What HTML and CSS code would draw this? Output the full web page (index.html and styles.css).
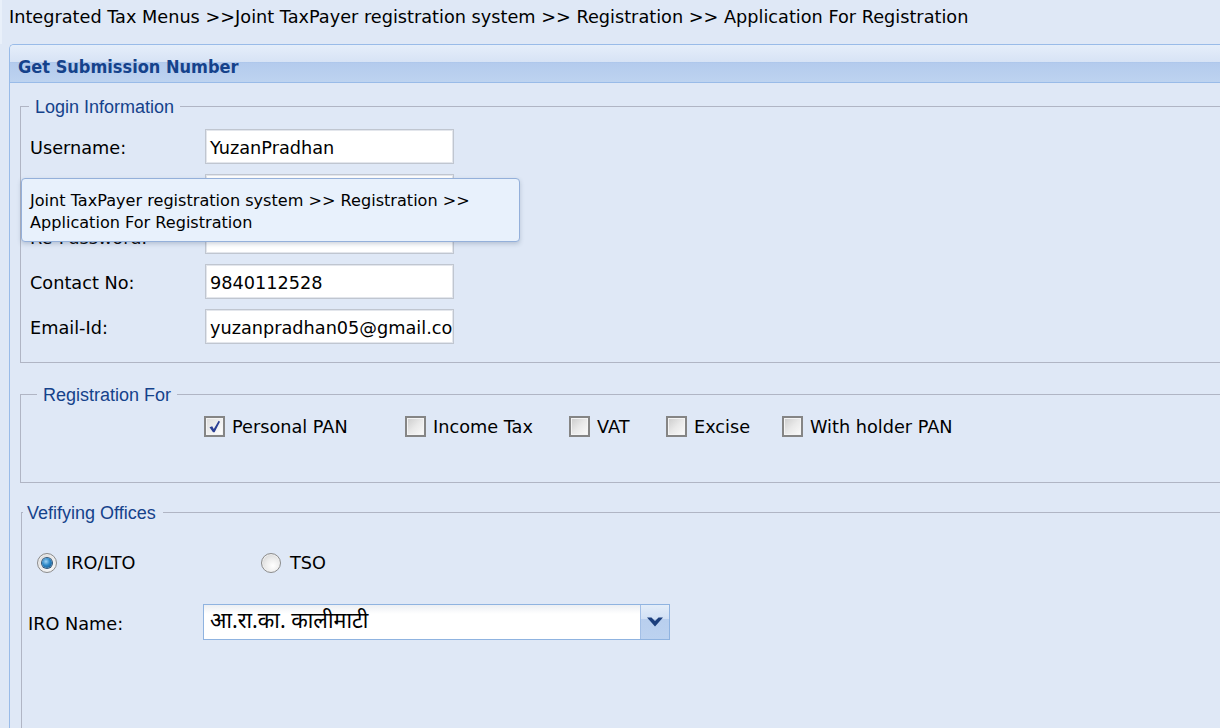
FILE: index.html
```html
<!DOCTYPE html>
<html lang="en">
<head>
<meta charset="utf-8">
<title>Application For Registration</title>
<link rel="stylesheet" href="styles.css">
</head>
<body>
<div class="crumb">Integrated Tax Menus &gt;&gt;Joint TaxPayer registration system &gt;&gt; Registration &gt;&gt; Application For Registration</div>
<div class="panel">
  <div class="panel-head">Get Submission Number</div>
  <div class="panel-body">
    <fieldset class="fs fs-login">
      <legend>Login Information</legend>
      <div class="form-grid">
        <div class="lbl">Username:</div><div class="field">YuzanPradhan</div>
        <div class="lbl">Password:</div><div class="field"></div>
        <div class="lbl">Re-Password:</div><div class="field"></div>
        <div class="lbl">Contact No:</div><div class="field">9840112528</div>
        <div class="lbl">Email-Id:</div><div class="field">yuzanpradhan05@gmail.co</div>
      </div>
    </fieldset>
    <fieldset class="fs fs-reg">
      <legend>Registration For</legend>
      <div class="checks">
        <span></span>
        <div class="chk"><span class="cb cb-on"><svg viewBox="0 0 13 13" width="13" height="13"><path d="M1.5 7.2 L4.2 6.2 L5.8 9 L10.6 0.8 L12 1.8 L6.6 12.2 L5 12.2 Z" fill="#2b3f94"/></svg></span><span class="chk-text">Personal PAN</span></div>
        <div class="chk"><span class="cb"></span><span class="chk-text">Income Tax</span></div>
        <div class="chk"><span class="cb"></span><span class="chk-text">VAT</span></div>
        <div class="chk"><span class="cb"></span><span class="chk-text">Excise</span></div>
        <div class="chk"><span class="cb"></span><span class="chk-text">With holder PAN</span></div>
      </div>
    </fieldset>
    <fieldset class="fs fs-office">
      <legend>Vefifying Offices</legend>
      <div class="radios">
        <div class="rd"><span class="radio radio-on"><span class="dot"></span></span><span class="chk-text">IRO/LTO</span></div>
        <div class="rd"><span class="radio"></span><span class="chk-text">TSO</span></div>
      </div>
      <div class="select-row">
        <div class="lbl">IRO Name:</div>
        <div class="combo">
          <span class="combo-text">आ.रा.का. कालीमाटी</span>
          <span class="trigger"><svg viewBox="0 0 16 10" width="16" height="10"><polygon points="0,0.5 4.5,0.5 8,4 11.5,0.5 16,0.5 8,9.5" fill="#1c3f7c"/></svg></span>
        </div>
      </div>
    </fieldset>
  </div>
</div>
<div class="tooltip">Joint TaxPayer registration system &gt;&gt; Registration &gt;&gt;<br>Application For Registration</div>
</body>
</html>
```

FILE: styles.css
```css
html, body {
  margin: 0;
  height: 100%;
  overflow: hidden;
}
body {
  background: #dfe8f6;
  font-family: "DejaVu Sans", sans-serif;
  font-size: 17.7px;
  color: #000;
  position: relative;
}
.crumb {
  height: 44px;
  box-sizing: border-box;
  line-height: 34px;
  padding-left: 7px;
  border-left: 2px solid #e9f0fa;
  white-space: nowrap;
}
.panel {
  margin-left: 9px;
  width: 1300px;
  height: 700px;
  border: 1px solid #99bbe8;
  border-right: none;
  border-top-left-radius: 5px;
  overflow: hidden;
}
.panel-head {
  height: 38px;
  box-sizing: border-box;
  border-bottom: 1px solid #99bbe8;
  background: linear-gradient(to bottom, #e5eefa 0, #d7e3f5 17px, #a9c4ea 17px, #b4cbed 18px, #bdd3f0 100%);
  color: #15428b;
  font-family: "DejaVu Sans Condensed", "DejaVu Sans", sans-serif;
  font-weight: bold;
  font-size: 18px;
  line-height: 37px;
  padding-left: 8px;
  padding-top: 3px;
}
.panel-body {
  padding-top: 13px;
}
.fs {
  width: 1300px;
  box-sizing: border-box;
  margin: 0 0 0 10px;
  padding: 0;
  border: 1px solid #b0b5c4;
  min-inline-size: 0;
}
.fs legend {
  font-family: "Liberation Sans", Arial, sans-serif;
  font-size: 18px;
  line-height: 17px;
  padding-top: 3px;
  color: #15428b;
}
.fs-login legend { margin-left: -1px; padding-left: 6px; padding-right: 6px; }
.fs-reg legend { margin-left: 7px; padding-left: 6px; padding-right: 6px; }
.fs-office legend { margin-left: -5px; padding-left: 4px; padding-right: 7px; }

.fs-login {
  padding: 13px 0 18px 9px;
}
.form-grid {
  display: grid;
  grid-template-columns: 175px 249px;
  row-gap: 10px;
}
.lbl {
  height: 35px;
  box-sizing: border-box;
  padding-top: 4px;
  line-height: 31px;
  white-space: nowrap;
}
.field {
  height: 35px;
  box-sizing: border-box;
  border: 1px solid #c0c6d0;
  box-shadow: inset 0 0 0 1px #e3e6ec;
  background: #fff;
  padding: 3px 0 0 4px;
  line-height: 31px;
  white-space: nowrap;
  overflow: hidden;
}

.fs-reg {
  margin-top: 21px;
  padding: 11px 0 46px 9px;
}
.checks {
  display: grid;
  grid-template-columns: 174px 201px 164px 97px 116px auto;
  height: 21px;
}
.chk {
  display: flex;
  align-items: center;
  gap: 7px;
  white-space: nowrap;
  line-height: 21px;
}
.chk-text {
  padding-top: 2px;
  line-height: 20px;
}
.cb {
  width: 21px;
  height: 21px;
  box-sizing: border-box;
  border: 2px solid #858585;
  background: linear-gradient(135deg, #cbcbcb 0%, #e9e9e9 50%, #fbfbfb 100%);
  box-shadow: inset 0 0 0 1px #f4f4f4;
  display: flex;
  align-items: center;
  justify-content: center;
  flex: none;
}
.cb-on {
  background: linear-gradient(135deg, #dcdcdc 0%, #f2f2f2 60%, #fff 100%);
}

.fs-office {
  margin-top: 19px;
  margin-left: 11px;
  padding: 30px 0 200px 6px;
}
.radios {
  display: grid;
  grid-template-columns: 224px auto;
  padding-left: 9px;
  height: 20px;
}
.rd {
  display: flex;
  align-items: center;
  gap: 9px;
  line-height: 20px;
}
.rd .chk-text {
  padding-top: 1px;
}
.radio {
  width: 20px;
  height: 20px;
  box-sizing: border-box;
  border-radius: 50%;
  border: 1px solid #8c8c8c;
  background: radial-gradient(circle at 60% 65%, #ffffff 0%, #ececec 45%, #c9c9c9 100%);
  box-shadow: inset 0 0 0 1px #f0f0f0;
  display: flex;
  align-items: center;
  justify-content: center;
  flex: none;
}
.radio-on .dot {
  width: 10px;
  height: 10px;
  border-radius: 50%;
  background: radial-gradient(circle at 40% 35%, #9fd3f5 0%, #2a86c6 45%, #134b7c 100%);
  box-shadow: 0 0 0 1px #2f5478;
}
.select-row {
  display: grid;
  grid-template-columns: 175px 467px;
  margin-top: 32px;
  align-items: center;
}
.select-row .lbl {
  height: 36px;
  padding-top: 4px;
  line-height: 32px;
}
.combo {
  display: flex;
  height: 36px;
  box-sizing: border-box;
  border: 1px solid #8fb3e0;
  background: linear-gradient(to bottom, #eceff3 0, #ffffff 9px);
}
.combo-text {
  flex: 1;
  padding: 3px 0 0 6px;
  line-height: 31px;
  font-size: 21.5px;
  font-family: "Noto Sans Devanagari", "Lohit Devanagari", "FreeSans", "DejaVu Sans", sans-serif;
  white-space: nowrap;
}
.trigger {
  width: 29px;
  border-left: 1px solid #a3bfe6;
  border-top-right-radius: 3px;
  background: linear-gradient(to bottom, #e3edf9 0, #d2e1f5 40%, #b9cfee 41%, #bcd2f0 100%);
  display: flex;
  justify-content: center;
  padding-top: 12px;
  box-sizing: border-box;
}

.tooltip {
  position: absolute;
  left: 21px;
  top: 178px;
  width: 499px;
  height: 64px;
  box-sizing: border-box;
  border: 1px solid #94b0da;
  border-radius: 4px;
  background: #e8f1fc;
  box-shadow: 0 2px 4px rgba(60, 80, 110, 0.25);
  padding: 11px 0 0 8px;
  font-size: 16.1px;
  line-height: 22px;
  white-space: nowrap;
}
```
